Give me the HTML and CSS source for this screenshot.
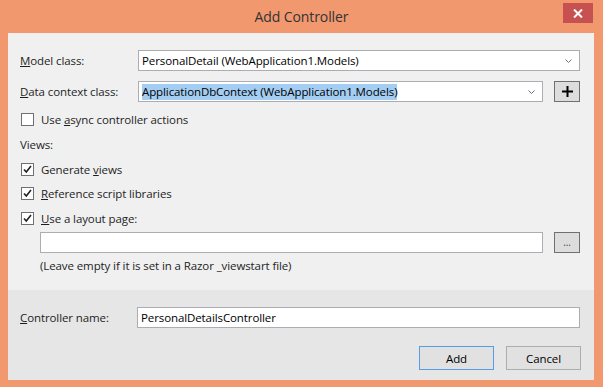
FILE: index.html
```html
<!DOCTYPE html>
<html lang="en">
<head>
    <meta charset="UTF-8">
    <title>Add Controller</title>
    <link rel="stylesheet" href="styles.css">
</head>
<body>

<div class="window">
    <div class="titlebar">
        <span></span>
        <div class="title">Add Controller</div>
        <div class="close">
            <svg width="10" height="9" viewBox="0 0 10 9"><path d="M1 0.5 L9 8.5 M9 0.5 L1 8.5" stroke="#fff" stroke-width="2"/></svg>
        </div>
    </div>

    <div class="client">
        <div class="main">
            <div class="row">
                <label class="lbl"><u>M</u>odel class:</label>
                <div class="combo">
                    <span class="val">PersonalDetail (WebApplication1.Models)</span>
                    <svg class="arrow" width="7" height="4" viewBox="0 0 7 4"><path d="M0.5 0.5 L3.5 3.5 L6.5 0.5" stroke="#707070" fill="none"/></svg>
                </div>
            </div>

            <div class="row row-gap">
                <label class="lbl"><u>D</u>ata context class:</label>
                <div class="combo">
                    <span class="val sel">ApplicationDbContext (WebApplication1.Models)</span>
                    <svg class="arrow" width="7" height="4" viewBox="0 0 7 4"><path d="M0.5 0.5 L3.5 3.5 L6.5 0.5" stroke="#707070" fill="none"/></svg>
                </div>
                <button class="btn small">
                    <svg width="11" height="11" viewBox="0 0 11 11"><path d="M5.5 0 V11 M0 5.5 H11" stroke="#000" stroke-width="2"/></svg>
                </button>
            </div>

            <div class="check check-async">
                <span class="box"></span>
                <span>Use <u>a</u>sync controller actions</span>
            </div>

            <div class="group">Views:</div>

            <div class="check check-first">
                <span class="box"><svg width="11" height="11" viewBox="0 0 11 11"><path d="M2 5.5 L4.3 8 L9 2" stroke="#222" stroke-width="1.6" fill="none"/></svg></span>
                <span>Generate <u>v</u>iews</span>
            </div>
            <div class="check">
                <span class="box"><svg width="11" height="11" viewBox="0 0 11 11"><path d="M2 5.5 L4.3 8 L9 2" stroke="#222" stroke-width="1.6" fill="none"/></svg></span>
                <span><u>R</u>eference script libraries</span>
            </div>
            <div class="check check-layout">
                <span class="box"><svg width="11" height="11" viewBox="0 0 11 11"><path d="M2 5.5 L4.3 8 L9 2" stroke="#222" stroke-width="1.6" fill="none"/></svg></span>
                <span><u>U</u>se a layout page:</span>
            </div>

            <div class="row layout-row">
                <div class="text"></div>
                <button class="btn small dots">...</button>
            </div>

            <div class="hint">(Leave empty if it is set in a Razor _viewstart file)</div>
        </div>

        <div class="footer">
            <div class="row">
                <label class="lbl lbl-name"><u>C</u>ontroller name:</label>
                <div class="text">PersonalDetailsController</div>
            </div>
            <div class="actions">
                <button class="btn default">Add</button>
                <button class="btn">Cancel</button>
            </div>
        </div>
    </div>
</div>

</body>
</html>
```

FILE: styles.css
```css
body {
    margin: 0;
    background-color: #f1986f;
    font-family: "Open Sans", "Liberation Sans", sans-serif;
    font-size: 11.5px;
    letter-spacing: -0.1px;
    color: #1e1e1e;
}
.window {
    height: 387px;
    display: flex;
    flex-direction: column;
}
.titlebar {
    height: 33px;
    display: grid;
    grid-template-columns: 1fr auto 1fr;
    align-items: start;
}
.title {
    font-size: 14px;
    letter-spacing: -0.1px;
    line-height: 33px;
    color: #333333;
}
.close {
    justify-self: end;
    width: 30px;
    height: 20px;
    margin: 3px 10px 0 0;
    background-color: #c75050;
    display: flex;
    align-items: center;
    justify-content: center;
}
.client {
    flex: 1;
    margin: 0 9px 7px 8px;
    background-color: #f0f0f0;
    display: flex;
    flex-direction: column;
}
.main {
    flex: 1;
    padding: 17px 14px 0 12px;
}
.row {
    display: flex;
    align-items: center;
    height: 21px;
}
.row-gap {
    margin-top: 10px;
}
.lbl {
    width: 118px;
    flex-shrink: 0;
}
.lbl-name {
    width: 117px;
}
.combo, .text {
    flex: 1;
    height: 21px;
    box-sizing: border-box;
    border: 1px solid #abadb3;
    background-color: #ffffff;
    display: flex;
    align-items: center;
    padding: 0 3px;
    color: #000;
}
.combo .val {
    flex: 1;
}
.sel {
    flex: none !important;
    background-color: #a3cdf2;
    line-height: 16px;
    margin-right: auto;
}
.arrow {
    margin-right: 4px;
}
.btn {
    font-family: inherit;
    font-size: 11.5px;
    letter-spacing: -0.1px;
    color: #000;
    background-color: #e1e1e1;
    border: 1px solid #adadad;
    padding: 0;
    display: flex;
    align-items: center;
    justify-content: center;
}
.small {
    width: 26px;
    height: 21px;
    margin-left: 11px;
    background-color: #dddddd;
    border-color: #707070;
}
.dots {
    font-size: 10px;
    line-height: 10px;
    color: #444;
    padding-bottom: 2px;
}
.check {
    display: flex;
    align-items: center;
    height: 20px;
    margin-top: 4px;
}
.check-async {
    margin-top: 7px;
}
.check-layout {
    margin-top: 5px;
}
.box {
    width: 13px;
    height: 13px;
    box-sizing: border-box;
    border: 1px solid #707070;
    background-color: #ffffff;
    margin: 0 7px 0 1px;
    display: flex;
    align-items: center;
    justify-content: center;
}
.group {
    height: 20px;
    line-height: 20px;
    margin-top: 6px;
}
.layout-row {
    margin-top: 4px;
    margin-left: 20px;
}
.hint {
    height: 20px;
    line-height: 20px;
    margin: 3px 0 0 20px;
}
.footer {
    background-color: #e6e6e6;
    padding: 17px 14px 10px 12px;
}
.actions {
    display: flex;
    justify-content: flex-end;
    gap: 12px;
    margin-top: 18px;
    margin-right: -1px;
}
.actions .btn {
    width: 75px;
    height: 24px;
}
.default {
    border-color: #569de5;
}
```
